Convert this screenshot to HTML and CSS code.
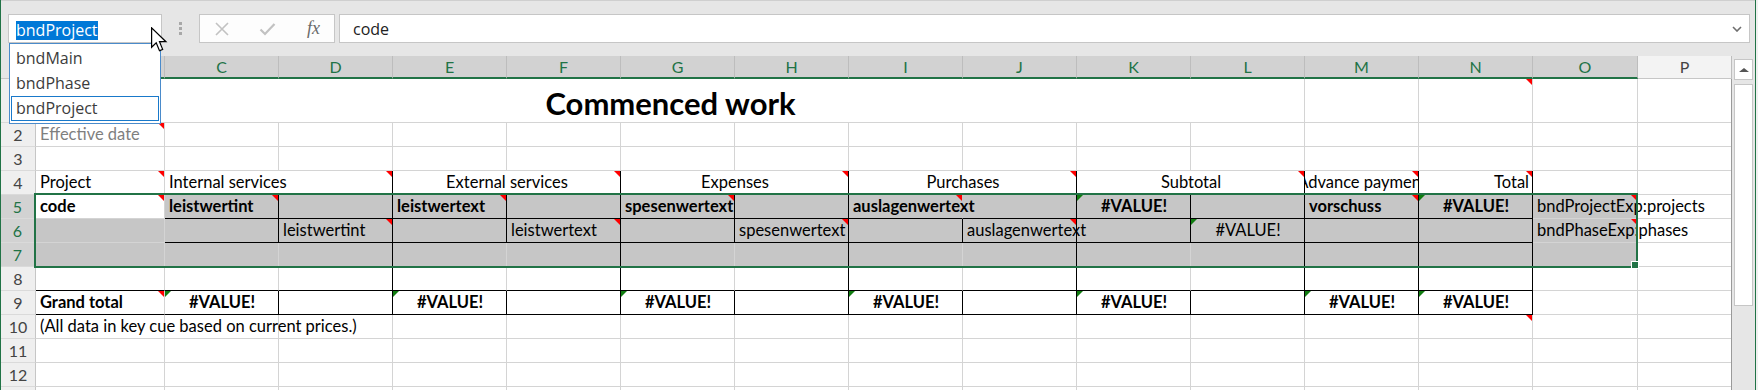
FILE: index.html
```html
<!DOCTYPE html>
<html>
<head>
    <title>Commenced work</title>
    <meta charset="utf-8">
    <link rel="stylesheet" href="styles.css">
</head>
<body>
<div class="window">
    <div class="topbar">
        <div class="namebox"><span class="picked">bndProject</span></div>
        <div class="grip"><i></i><i></i><i></i></div>
        <div class="fbtns">
            <svg class="ic-x" width="14" height="14" viewBox="0 0 14 14"><path d="M1 1 L13 13 M13 1 L1 13" stroke="#c2c2c2" stroke-width="1.6" fill="none"/></svg>
            <svg class="ic-ok" width="17" height="14" viewBox="0 0 17 14"><path d="M1.5 7.5 L6 12 L15.5 2" stroke="#c2c2c2" stroke-width="2.2" fill="none"/></svg>
            <span class="fx">fx</span>
        </div>
        <div class="finput">
            <span>code</span>
            <svg class="chev" width="10" height="6" viewBox="0 0 10 6"><path d="M1 1 L5 5 L9 1" stroke="#6e6e6e" stroke-width="1.6" fill="none"/></svg>
        </div>
    </div>

    <div class="names">
        <div class="name-item">bndMain</div>
        <div class="name-item">bndPhase</div>
        <div class="name-item current">bndProject</div>
    </div>

    <svg class="pointer" width="17" height="26" viewBox="0 0 14 21">
        <path d="M0.5 0.5 L0.5 16.5 L4.3 12.8 L7 19.3 L9.6 18.2 L7 11.9 L12.3 11.9 Z" fill="#fff" stroke="#000" stroke-width="1"/>
    </svg>

    <div class="main">
        <div class="sheet">
            <!-- column headers -->
            <div class="ch corner"></div>
            <div class="ch on">B</div>
            <div class="ch on">C</div>
            <div class="ch on">D</div>
            <div class="ch on">E</div>
            <div class="ch on">F</div>
            <div class="ch on">G</div>
            <div class="ch on">H</div>
            <div class="ch on">I</div>
            <div class="ch on">J</div>
            <div class="ch on">K</div>
            <div class="ch on">L</div>
            <div class="ch on">M</div>
            <div class="ch on">N</div>
            <div class="ch on">O</div>
            <div class="ch">P</div>

            <!-- row 1 -->
            <div class="rh tall">1</div>
            <div class="c title">Commenced work</div>
            <div class="c"></div>
            <div class="c n"></div>
            <div class="c"></div>
            <div class="c"></div>

            <!-- row 2 -->
            <div class="rh">2</div>
            <div class="c gr n">Effective date</div>
            <div class="c"></div><div class="c"></div><div class="c"></div><div class="c"></div>
            <div class="c"></div><div class="c"></div><div class="c"></div><div class="c"></div>
            <div class="c"></div><div class="c"></div><div class="c"></div><div class="c"></div>
            <div class="c"></div><div class="c"></div>

            <!-- row 3 -->
            <div class="rh">3</div>
            <div class="c"></div>
            <div class="c"></div><div class="c"></div><div class="c"></div><div class="c"></div>
            <div class="c"></div><div class="c"></div><div class="c"></div><div class="c"></div>
            <div class="c"></div><div class="c"></div><div class="c"></div><div class="c"></div>
            <div class="c"></div><div class="c"></div>

            <!-- row 4 -->
            <div class="rh">4</div>
            <div class="c n">Project</div>
            <div class="c w2 br n">Internal services</div>
            <div class="c w2 ctr br n">External services</div>
            <div class="c w2 ctr br n">Expenses</div>
            <div class="c w2 ctr br n">Purchases</div>
            <div class="c w2 ctr br n">Subtotal</div>
            <div class="c clip br n">Advance payment</div>
            <div class="c rt br n">Total</div>
            <div class="c"></div>
            <div class="c"></div>

            <!-- row 5 -->
            <div class="rh on">5</div>
            <div class="c b n">code</div>
            <div class="c b sel br bb n">leistwertint</div>
            <div class="c sel br bb"></div>
            <div class="c b sel br bb n">leistwertext</div>
            <div class="c sel br bb"></div>
            <div class="c b sel br bb n spill">spesenwertext</div>
            <div class="c sel br bb"></div>
            <div class="c b sel nr bb n spill">auslagenwertext</div>
            <div class="c sel br bb"></div>
            <div class="c b ctr sel br bb e">#VALUE!</div>
            <div class="c sel br bb"></div>
            <div class="c b sel br bb n">vorschuss</div>
            <div class="c b ctr sel br bb e">#VALUE!</div>
            <div class="c sel n spill">bndProjectExp:projects</div>
            <div class="c"></div>

            <!-- row 6 -->
            <div class="rh on">6</div>
            <div class="c sel"></div>
            <div class="c sel br bb"></div>
            <div class="c sel br bb n">leistwertint</div>
            <div class="c sel br bb"></div>
            <div class="c sel br bb n">leistwertext</div>
            <div class="c sel br bb"></div>
            <div class="c sel br bb n spill">spesenwertext</div>
            <div class="c sel br bb"></div>
            <div class="c sel br bb n spill">auslagenwertext</div>
            <div class="c sel br bb"></div>
            <div class="c ctr sel br bb e">#VALUE!</div>
            <div class="c sel br bb"></div>
            <div class="c sel br bb"></div>
            <div class="c sel n spill">bndPhaseExp:phases</div>
            <div class="c"></div>

            <!-- row 7 -->
            <div class="rh on">7</div>
            <div class="c sel"></div>
            <div class="c sel"></div>
            <div class="c sel br"></div>
            <div class="c sel"></div>
            <div class="c sel br"></div>
            <div class="c sel"></div>
            <div class="c sel br"></div>
            <div class="c sel"></div>
            <div class="c sel br"></div>
            <div class="c sel"></div>
            <div class="c sel br"></div>
            <div class="c sel br"></div>
            <div class="c sel br"></div>
            <div class="c sel"></div>
            <div class="c"></div>

            <!-- row 8 -->
            <div class="rh">8</div>
            <div class="c bb"></div>
            <div class="c bb"></div>
            <div class="c br bb"></div>
            <div class="c bb"></div>
            <div class="c br bb"></div>
            <div class="c bb"></div>
            <div class="c br bb"></div>
            <div class="c bb"></div>
            <div class="c br bb"></div>
            <div class="c bb"></div>
            <div class="c br bb"></div>
            <div class="c br bb"></div>
            <div class="c br bb"></div>
            <div class="c"></div>
            <div class="c"></div>

            <!-- row 9 -->
            <div class="rh">9</div>
            <div class="c b bb n">Grand total</div>
            <div class="c b ctr br bb e">#VALUE!</div>
            <div class="c br bb"></div>
            <div class="c b ctr br bb e">#VALUE!</div>
            <div class="c br bb"></div>
            <div class="c b ctr br bb e">#VALUE!</div>
            <div class="c br bb"></div>
            <div class="c b ctr br bb e">#VALUE!</div>
            <div class="c br bb"></div>
            <div class="c b ctr br bb e">#VALUE!</div>
            <div class="c br bb"></div>
            <div class="c b ctr br bb e">#VALUE!</div>
            <div class="c b ctr br bb e">#VALUE!</div>
            <div class="c"></div>
            <div class="c"></div>

            <!-- row 10 -->
            <div class="rh">10</div>
            <div class="c spill">(All data in key cue based on current prices.)</div>
            <div class="c"></div><div class="c"></div><div class="c"></div><div class="c"></div>
            <div class="c"></div><div class="c"></div><div class="c"></div><div class="c"></div>
            <div class="c"></div><div class="c"></div><div class="c"></div>
            <div class="c n"></div>
            <div class="c"></div><div class="c"></div>

            <!-- row 11 -->
            <div class="rh">11</div>
            <div class="c"></div>
            <div class="c"></div><div class="c"></div><div class="c"></div><div class="c"></div>
            <div class="c"></div><div class="c"></div><div class="c"></div><div class="c"></div>
            <div class="c"></div><div class="c"></div><div class="c"></div><div class="c"></div>
            <div class="c"></div><div class="c"></div>

            <!-- row 12 -->
            <div class="rh">12</div>
            <div class="c"></div>
            <div class="c"></div><div class="c"></div><div class="c"></div><div class="c"></div>
            <div class="c"></div><div class="c"></div><div class="c"></div><div class="c"></div>
            <div class="c"></div><div class="c"></div><div class="c"></div><div class="c"></div>
            <div class="c"></div><div class="c"></div>

            <!-- row 13 -->
            <div class="rh"></div>
            <div class="c"></div>
            <div class="c"></div><div class="c"></div><div class="c"></div><div class="c"></div>
            <div class="c"></div><div class="c"></div><div class="c"></div><div class="c"></div>
            <div class="c"></div><div class="c"></div><div class="c"></div><div class="c"></div>
            <div class="c"></div><div class="c"></div>

            <!-- frozen pane line and selected range -->
            <div class="freeze"></div>
            <div class="selbox"></div>
        </div>

        <div class="vscroll">
            <div class="up"></div>
            <div class="thumb"></div>
        </div>
    </div>
</div>
</body>
</html>
```

FILE: styles.css
```css
* {
    box-sizing: border-box;
}
body {
    margin: 0;
    background-color: #f0f0f0;
    font-family: Lato, "Liberation Sans", Arial, sans-serif;
    overflow: hidden;
}
.window {
    position: relative;
    width: 1756px;
    height: 390px;
    border-left: 1px solid #217346;
    border-right: 1px solid #217346;
    background-color: #e6e6e6;
    overflow: hidden;
}

/* formula bar */
.topbar {
    display: flex;
    align-items: flex-start;
    height: 56px;
    padding-top: 13px;
    border-top: 1px solid #cfcfcf;
    font-family: "Open Sans", "Liberation Sans", sans-serif;
    font-size: 16px;
}
.namebox {
    width: 154px;
    height: 29px;
    margin-left: 7px;
    padding: 4px 0 0 7px;
    background-color: #fff;
    border: 1px solid #c6c6c6;
}
.picked {
    display: inline-block;
    background-color: #0078d7;
    color: #fff;
    line-height: 19px;
}
.grip {
    display: flex;
    flex-direction: column;
    gap: 2px;
    margin-left: 17px;
    padding-top: 8px;
}
.grip i {
    display: block;
    width: 3px;
    height: 3px;
    background-color: #a8a8a8;
}
.fbtns {
    display: flex;
    align-items: center;
    width: 136px;
    height: 29px;
    margin-left: 17px;
    padding-left: 15px;
    background-color: #fdfdfd;
    border: 1px solid #c6c6c6;
}
.ic-ok {
    margin-left: 30px;
}
.fx {
    margin-left: 31px;
    font-family: "Liberation Serif", serif;
    font-style: italic;
    font-size: 18px;
    color: #6a6a6a;
}
.finput {
    display: flex;
    align-items: center;
    width: 1411px;
    height: 29px;
    margin-left: 4px;
    padding-left: 13px;
    background-color: #fff;
    border: 1px solid #c6c6c6;
    color: #222;
}
.chev {
    margin-left: auto;
    margin-right: 7px;
}

/* name box dropdown */
.names {
    position: absolute;
    left: 8px;
    top: 43px;
    width: 152px;
    height: 81px;
    padding: 2px 1px;
    background-color: #fff;
    border: 1px solid #4a8bcb;
    z-index: 5;
    font-family: "Open Sans", "Liberation Sans", sans-serif;
    font-size: 16px;
    color: #3c3c3c;
}
.name-item {
    height: 25px;
    line-height: 22px;
    padding-left: 4px;
    border: 1px solid transparent;
}
.name-item.current {
    border-color: #1979ca;
}
.pointer {
    position: absolute;
    left: 150px;
    top: 27px;
    z-index: 6;
}

/* sheet */
.main {
    display: flex;
}
.sheet {
    position: relative;
    display: grid;
    grid-template-columns: 35px 129px repeat(12, 114px) 105px 94px;
    grid-template-rows: 23px 44px repeat(12, 24px);
    background-color: #fff;
}
.ch {
    position: relative;
    background-color: #f3f3f3;
    border-right: 1px solid #bdbdbd;
    border-bottom: 1px solid #c6c6c6;
    text-align: center;
    font-size: 16px;
    line-height: 22px;
    color: #444;
}
.ch.on {
    background-color: #d2d2d2;
    color: #217346;
    border-bottom: 2px solid #217346;
    line-height: 21px;
}
.ch.corner {
    background-color: #e6e6e6;
}
.rh {
    position: relative;
    background-color: #efefef;
    border-right: 1px solid #c6c6c6;
    border-bottom: 1px solid #dadada;
    text-align: center;
    font-size: 16px;
    line-height: 23px;
    color: #444;
}
.rh.tall {
    line-height: 43px;
}
.rh.on {
    background-color: #d2d2d2;
    color: #217346;
    border-right: 2px solid #217346;
}
.c {
    position: relative;
    border-right: 1px solid #d4d4d4;
    border-bottom: 1px solid #d4d4d4;
    padding: 0 3px 0 4px;
    font-size: 16.5px;
    line-height: 23px;
    white-space: nowrap;
    color: #000;
}
.title {
    grid-column: span 11;
    display: flex;
    justify-content: center;
    align-items: flex-end;
    font-size: 31px;
    font-weight: 700;
    line-height: 37px;
}
.w2 {
    grid-column: span 2;
}
.b {
    font-weight: 700;
}
.ctr {
    text-align: center;
}
.rt {
    text-align: right;
}
.gr {
    color: #7f7f7f;
}
.sel {
    background-color: #c6c6c6;
}
.br {
    border-right-color: #000;
}
.bb {
    border-bottom-color: #000;
}
.nr {
    border-right-color: transparent;
}
.spill {
    z-index: 1;
}
.clip {
    display: flex;
    justify-content: center;
    overflow: hidden;
}
.n::after {
    content: "";
    position: absolute;
    top: 0;
    right: 0;
    border-top: 6px solid #ff0000;
    border-left: 6px solid transparent;
}
.e::before {
    content: "";
    position: absolute;
    top: 0;
    left: 0;
    border-top: 6px solid #107c10;
    border-right: 6px solid transparent;
}
.freeze {
    position: absolute;
    grid-column: 2;
    grid-row: 2 / -1;
    top: 0;
    bottom: 0;
    right: 0;
    width: 1px;
    background-color: #9a9a9a;
    z-index: 2;
}
.selbox {
    position: absolute;
    grid-column: 2 / 16;
    grid-row: 6 / 9;
    top: -2px;
    left: -2px;
    right: 0;
    bottom: -1px;
    border: 2px solid #217346;
    z-index: 2;
}
.selbox::after {
    content: "";
    position: absolute;
    right: -3px;
    bottom: -3px;
    width: 6px;
    height: 6px;
    background-color: #217346;
    border: 1px solid #fff;
}

/* vertical scroll bar */
.vscroll {
    width: 23px;
    padding: 3px 2px 0;
    background-color: #e6e6e6;
}
.up {
    display: flex;
    align-items: center;
    justify-content: center;
    height: 21px;
    background-color: #fff;
    border: 1px solid #c6c6c6;
}
.up::before {
    content: "";
    border-left: 5px solid transparent;
    border-right: 5px solid transparent;
    border-bottom: 4px solid #555;
}
.thumb {
    height: 222px;
    margin-top: 4px;
    background-color: #fff;
    border: 1px solid #c6c6c6;
}
```
